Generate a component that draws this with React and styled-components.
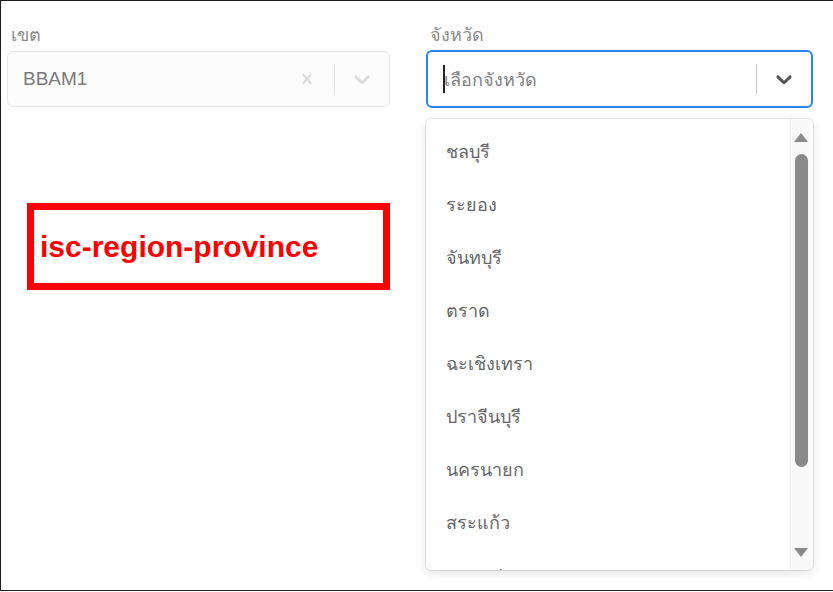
import React from "react";
import styled, { createGlobalStyle } from "styled-components";

const GlobalStyle = createGlobalStyle`
  body {
    margin: 0;
    background: #ffffff;
    font-family: "Noto Sans", "Open Sans", sans-serif;
  }
`;

const provinces = [
  "ชลบุรี",
  "ระยอง",
  "จันทบุรี",
  "ตราด",
  "ฉะเชิงเทรา",
  "ปราจีนบุรี",
  "นครนายก",
  "สระแก้ว",
  "สมุทรปราการ",
];

const App = () => {
  return (
    <>
      <GlobalStyle />
      <Frame>
        <Column>
          <Label>เขต</Label>
          <Control disabled>
            <Value>BBAM1</Value>
            <Indicators>
              <IconButton>
                <CrossIcon color="#dcdcdc" />
              </IconButton>
              <Separator light />
              <IconButton>
                <ChevronIcon color="#dcdcdc" />
              </IconButton>
            </Indicators>
          </Control>
          <TagBox>
            <TagText>isc-region-province</TagText>
          </TagBox>
        </Column>
        <Column>
          <Label>จังหวัด</Label>
          <Control focused>
            <Caret />
            <Placeholder>เลือกจังหวัด</Placeholder>
            <Indicators>
              <Separator />
              <IconButton>
                <ChevronIcon color="#555" />
              </IconButton>
            </Indicators>
          </Control>
          <Menu>
            <OptionList>
              {provinces.map((p) => (
                <Option key={p}>{p}</Option>
              ))}
            </OptionList>
            <Scrollbar>
              <Arrow up />
              <Track>
                <Thumb />
              </Track>
              <Arrow />
            </Scrollbar>
          </Menu>
        </Column>
      </Frame>
    </>
  );
};

export default App;

const CrossIcon = ({ color }) => (
  <svg width="20" height="20" viewBox="0 0 20 20">
    <path
      fill={color}
      d="M14.348 14.849c-0.469 0.469-1.229 0.469-1.697 0l-2.651-3.030-2.651 3.029c-0.469 0.469-1.229 0.469-1.697 0-0.469-0.469-0.469-1.229 0-1.697l2.758-3.15-2.759-3.152c-0.469-0.469-0.469-1.228 0-1.697s1.228-0.469 1.697 0l2.652 3.031 2.651-3.031c0.469-0.469 1.228-0.469 1.697 0s0.469 1.229 0 1.697l-2.758 3.152 2.758 3.15c0.469 0.469 0.469 1.229 0 1.698z"
    />
  </svg>
);

const ChevronIcon = ({ color }) => (
  <svg width="26" height="26" viewBox="0 0 20 20">
    <path
      fill={color}
      d="M4.516 7.548c0.436-0.446 1.043-0.481 1.576 0l3.908 3.747 3.908-3.747c0.533-0.481 1.141-0.446 1.574 0 0.436 0.445 0.408 1.197 0 1.615-0.406 0.418-4.695 4.502-4.695 4.502-0.217 0.223-0.502 0.335-0.787 0.335s-0.57-0.112-0.789-0.335c0 0-4.287-4.084-4.695-4.502s-0.436-1.17 0-1.615z"
    />
  </svg>
);

const Frame = styled.div`
  box-sizing: border-box;
  height: 591px;
  border-top: 1px solid #1e1e1e;
  border-left: 1px solid #1e1e1e;
  border-bottom: 1px solid #1e1e1e;
  padding: 20px 20px 0 6px;
  display: grid;
  grid-template-columns: 383px 387px;
  column-gap: 36px;
  overflow: hidden;
`;

const Column = styled.div`
  display: flex;
  flex-direction: column;
  min-width: 0;
`;

const Label = styled.div`
  font-size: 18px;
  line-height: 26px;
  color: #8a8a8a;
  padding-left: 4px;
  margin-bottom: 4px;
  font-weight: 300;
`;

const Control = styled.div`
  box-sizing: border-box;
  height: ${(p) => (p.focused ? "58px" : "56px")};
  margin-top: ${(p) => (p.focused ? "-1px" : "0")};
  display: flex;
  align-items: center;
  border-radius: 6px;
  border: ${(p) => (p.focused ? "2px solid #2684ff" : "1px solid #e8e8e8")};
  background: ${(p) => (p.disabled ? "#fcfcfc" : "#ffffff")};
  padding-left: 15px;
`;

const Value = styled.div`
  flex: 1;
  font-family: "Liberation Sans", Arial, sans-serif;
  font-size: 19px;
  color: #7a7a7a;
`;

const Placeholder = styled.div`
  flex: 1;
  font-size: 18px;
  color: #808080;
`;

const Caret = styled.span`
  width: 2px;
  height: 28px;
  background: #222;
  margin-right: -1px;
`;

const Indicators = styled.div`
  display: flex;
  align-items: center;
  align-self: stretch;
`;

const IconButton = styled.div`
  display: flex;
  align-items: center;
  justify-content: center;
  width: 54px;
`;

const Separator = styled.span`
  width: 1px;
  align-self: stretch;
  margin: 12px 0;
  background: ${(p) => (p.light ? "#e4e4e4" : "#cccccc")};
`;

const TagBox = styled.div`
  box-sizing: border-box;
  margin: 96px 0 0 20px;
  height: 87px;
  border: 7px solid #ff0000;
  display: flex;
  align-items: center;
  padding-left: 6px;
`;

const TagText = styled.span`
  font-family: "Liberation Sans", Arial, sans-serif;
  font-weight: bold;
  font-size: 30px;
  color: #ff0000;
`;

const Menu = styled.div`
  margin-top: 11px;
  height: 451px;
  border-radius: 5px;
  background: #fff;
  box-shadow: 0 0 0 1px rgba(0, 0, 0, 0.1), 0 4px 11px rgba(0, 0, 0, 0.1);
  display: flex;
  overflow: hidden;
`;

const OptionList = styled.div`
  flex: 1;
  padding-top: 6px;
`;

const Option = styled.div`
  height: 53px;
  display: flex;
  align-items: center;
  padding-left: 20px;
  font-size: 18px;
  color: #666;
`;

const Scrollbar = styled.div`
  width: 20px;
  margin-right: 2px;
  background: #f9f9f9;
  border-left: 1px solid #f0f0f0;
  display: flex;
  flex-direction: column;
  align-items: center;
`;

const Arrow = styled.span`
  width: 0;
  height: 0;
  border-left: 7px solid transparent;
  border-right: 7px solid transparent;
  ${(p) =>
    p.up
      ? "border-bottom: 9px solid #8a8a8a; margin: 14px 0 12px;"
      : "border-top: 9px solid #8a8a8a; margin: 6px 0 13px;"}
`;

const Track = styled.div`
  flex: 1;
  width: 100%;
  display: flex;
  justify-content: center;
`;

const Thumb = styled.div`
  width: 13px;
  height: 313px;
  border-radius: 7px;
  background: #8a8a8a;
`;
